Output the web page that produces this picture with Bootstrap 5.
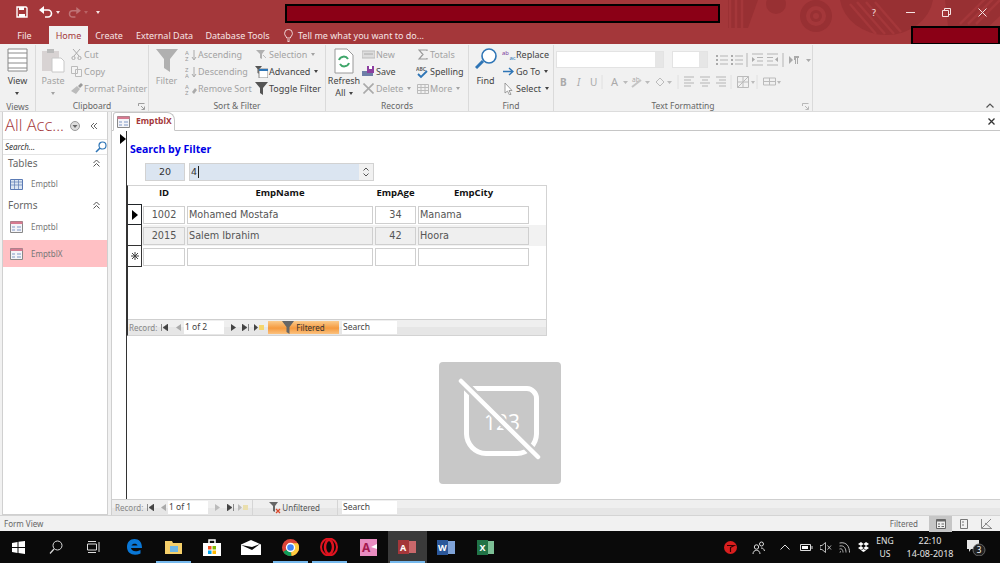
<!DOCTYPE html>
<html lang="en">
<head>
  <meta charset="UTF-8" />
  <meta name="viewport" content="width=device-width, initial-scale=1.0" />
  <title>Access - EmptblX</title>
  <link href="https://cdn.jsdelivr.net/npm/bootstrap@5.3.3/dist/css/bootstrap.min.css" rel="stylesheet" />
  <script src="https://cdn.jsdelivr.net/npm/bootstrap@5.3.3/dist/js/bootstrap.bundle.min.js"></script>
  <style>
    html, body { height: 563px; overflow: hidden; }
    body { width: 1000px; background: #f1f1f1; font-family: "Noto Sans", "Open Sans", sans-serif; font-size: 9px; line-height: 1; color: #444; }
    svg { display: block; flex: none; }

    /* fixed slots for toolbars */
    .s7 { width: 7px; } .s8 { width: 8px; } .s11 { width: 11px; } .s12 { width: 12px; } .s14 { width: 14px; } .s15 { width: 15px; }
    .s19 { width: 19px; } .s24 { width: 24px; } .s26 { width: 26px; } .s28 { width: 28.5px; } .s32 { width: 32px; } .s66 { width: 66px; }
    .slot { display: flex; justify-content: center; align-items: center; flex: none; }
    .slot-l { display: flex; align-items: center; flex: none; }

    /* title bar */
    .titlebar { height: 44px; background: #a4373a; color: #f6e4e4; position: relative; overflow: hidden; }
    .title-art { position: absolute; left: 0; top: 0; }
    .redact { position: absolute; background: #8b0016; border: 2px solid #000; }
    .redact-a { left: 285px; top: 4px; width: 435px; height: 19px; }
    .redact-b { left: 911px; top: 26px; width: 89px; height: 19px; }
    .qat { height: 24px; position: relative; padding-left: 16px; }
    .qat-undo { margin-left: 11px; }
    .tabs { height: 20px; position: relative; }
    .rtab { height: 18px; margin-top: 2px; display: flex; align-items: center; justify-content: center; }
    .rtab.active { background: #f1f1f1; color: #a4373a; }
    .w-file { width: 49px; } .w-home { width: 39px; } .w-create { width: 42px; } .w-ext { width: 69px; } .w-db { width: 77px; }
    .tell { margin-left: 8px; gap: 5px; }
    .winbtns { position: absolute; right: 0; top: 0; height: 24px; }
    .winbtns div { width: 36px; display: flex; justify-content: center; }

    /* ribbon */
    .ribbon { height: 68px; background: #f1f1f1; border-bottom: 1px solid #dcdcdc; }
    .rgroup { height: 66px; margin-top: 1px; border-right: 1px solid #dadada; position: relative; }
    .rgroup-body { height: 57px; }
    .rgroup-label { height: 9px; padding-top: 1px; box-sizing: content-box; text-align: center; color: #666; font-size: 8.5px; }
    .g-views { width: 36px; } .g-clip { width: 113px; } .g-sort { width: 177px; } .g-rec { width: 143px; } .g-find { width: 85px; } .g-text { width: 259px; }
    .launcher { position: absolute; right: 3px; bottom: 1px; }
    .big { display: flex; flex-direction: column; align-items: center; padding-top: 3px; flex: none; }
    .big .ico { height: 27px; display: flex; align-items: flex-start; }
    .big span { line-height: 12px; text-align: center; }
    .b-clip { width: 34px; } .b-sort { width: 35px; } .b-rec { width: 36px; } .b-find { width: 33px; }
    .c-sort-a { width: 71px; } .c-rec-a { width: 54px; }
    .smallcol { display: flex; flex-direction: column; padding-top: 1px; flex: none; }
    .smallcol > div { height: 17px; display: flex; align-items: center; gap: 1px; white-space: nowrap; }
    .ico12 { width: 13px; display: flex; justify-content: center; flex: none; }
    .off { color: #a3a3a3; }
    .caret-d { display: inline-block; border: 2px solid transparent; border-top: 3px solid currentColor; border-bottom: 0; margin-left: 3px; vertical-align: middle; }
    .text-body-dark { color: #444; }
    .text-rows { padding: 6px 0 0 2px; }
    .text-row-a { gap: 8px; }
    .text-row-b { margin-top: 7px; }
    .combo { height: 17px; background: #fff; border: 1px solid #e3e3e3; position: relative; flex: none; }
    .combo::after { content: ""; position: absolute; right: 0; top: 0; bottom: 0; width: 8px; background: #e6e6e6; }
    .combo-a { width: 108px; } .combo-b { width: 36px; }
    .collapse-r { position: absolute; right: 6px; bottom: 3px; }

    /* main */
    .main { height: 403px; background: #f1f1f1; }
    .navpane { width: 106px; margin: 0 3px 0 2px; background: #fff; border: 1px solid #d0d0d0; border-top: 0; flex: none; }
    .all-acc { height: 27px; color: #a4373a; font-family: "Open Sans", sans-serif; font-size: 16.5px; font-weight: 300; padding-left: 2px; }
    .acc-menu { margin-left: 6px; }
    .acc-hide { margin-left: 10px; }
    .nav-search { height: 16px; border-top: 1px solid #e4e4e4; border-bottom: 1px solid #e4e4e4; font-style: italic; font-size: 8px; padding-left: 2px; color: #333; }
    .nav-head { height: 15.5px; font-size: 10px; color: #666; padding: 0 7px 0 5px; }
    .nav-item { height: 27px; padding-left: 7px; gap: 8px; font-size: 8px; color: #777; }
    .nav-item.sel { background: #ffc0c4; }
    .doc { width: 889px; background: #fff; border-left: 1px solid #cfcfcf; }
    .tabstrip { height: 19px; background: #fff; border-bottom: 1px solid #c6c6c6; position: relative; }
    .doc-tab { width: 62px; height: 19px; margin-left: 1px; background: #fff; border: 1px solid #c6c6c6; border-bottom-color: #fff; border-radius: 3px 8px 0 0; padding-left: 3px; gap: 6px; color: #a4373a; font-weight: 700; font-size: 8.5px; }
    .tab-close { position: absolute; right: 5px; top: 6px; }
    .form-area { flex: 1; position: relative; overflow: hidden; }
    .form-rule { position: absolute; left: 14px; top: 0; bottom: 0; width: 1px; background: #333; }
    .form-arrow { position: absolute; left: 8px; top: 3px; }
    .form-inner { padding: 11px 0 0 15px; }
    .form-title { font-family: "Open Sans", sans-serif; color: #0000e6; font-size: 10.5px; font-weight: 700; height: 15px; line-height: 15px; padding-left: 3px; }
    .filter-row { margin: 6px 0 0 18px; height: 19px; gap: 4px; color: #333; }
    .fbox { background: #dbe5f1; border: 1px solid #d2d2d2; height: 18px; display: flex; align-items: center; font-family: "DejaVu Sans", sans-serif; font-size: 9.5px; }
    .fbox-a { width: 40px; justify-content: center; }
    .fbox-b { width: 185px; padding-left: 1px; justify-content: space-between; }
    .fbox-value { border-right: 1px solid #222; padding-right: 1px; line-height: 12px; }
    .spin { width: 14px; height: 16px; background: #f1f1f1; display: flex; flex-direction: column; align-items: center; justify-content: space-around; padding: 2px 0; }
    .subform { width: 420px; height: 151px; margin-top: 3px; border: 1px solid #d3d3d3; border-left-color: #333; position: relative; }
    .sub-head { height: 18px; font-family: "Open Sans", sans-serif; font-weight: 700; font-size: 9.5px; color: #111; padding-top: 2px; }
    .c-sel { width: 14px; flex: none; } .c-id { width: 42px; margin-left: 1px; } .c-name { width: 186px; margin-left: 2px; } .c-age { width: 41px; margin-left: 2px; } .c-city { width: 111px; margin-left: 2px; }
    .sub-row { height: 21px; align-items: center; }
    .sub-row.alt { background: #f2f2f2; }
    .sub-row .c-sel { height: 21px; border: 1px solid #333; border-left: 0; border-top-width: 0; display: flex; align-items: center; justify-content: center; background: #fff; }
    .cell { height: 18px; border: 1px solid #cfcfcf; background: #fff; display: flex; align-items: center; font-family: "DejaVu Sans", sans-serif; font-size: 9.7px; color: #555; padding: 0 1px; }
    .alt .cell { background: #efefef; }
    .cell.ctr { justify-content: center; }
    .recnav { height: 16px; background: linear-gradient(#efefef 50%, #e6e6e6 50%); border-top: 1px solid #cfcfcf; color: #888; font-size: 8px; }
    .sub-nav { position: absolute; left: 0; right: 0; bottom: 0; padding-left: 1px; }
    .recbox { background: #fff; height: 13px; display: flex; align-items: center; padding-left: 1px; color: #444; font-size: 8.5px; flex: none; }
    .rb-a { width: 40px; margin-right: 7px; } .rb-b { width: 55px; }
    .filtered { width: 71px; height: 13px; margin-right: 3px; background: linear-gradient(#fbcb8c, #f59a3f 55%, #fbc27f); color: #333; gap: 2px; justify-content: center; flex: none; }
    .unfiltered { width: 86px; justify-content: flex-end; padding-right: 17px; gap: 1px; border-left: 1px solid #d5d5d5; border-right: 1px solid #d5d5d5; height: 15px; margin-right: 4px; color: #555; flex: none; }
    .no-data { width: 122px; height: 122px; margin: 26px 0 0 312px; background: #c8c8c8; border-radius: 4px; display: flex; align-items: center; justify-content: center; }
    .form-nav { height: 16px; padding-left: 3px; flex: none; }
    .statusbar { height: 16px; background: #f1f1f1; border-top: 1px solid #d4d4d4; padding: 0 2px 0 4px; color: #666; font-size: 8px; }
    .status-label { margin-right: 11px; }
    .viewbtn { width: 23px; height: 16px; display: flex; align-items: center; justify-content: center; }
    .viewbtn.on { background: #c6c6c6; }

    /* taskbar */
    .taskbar { height: 32px; background: #0a0a0a; color: #e4e4e4; }
    .tb-ico { width: 39px; height: 32px; display: flex; align-items: center; justify-content: center; flex: none; position: relative; }
    .tb-ico.sys { width: 37.5px; }
    .tb-ico.first-app { margin-left: 2px; }
    .tb-ico.open::after { content: ""; position: absolute; left: 2px; right: 2px; bottom: 0; height: 2px; background: #76b9ed; }
    .tb-ico.cur { background: #3a3a3a; }
    .tray { margin-right: 11px; }
    .tray-text { font-size: 8.5px; line-height: 13px; text-align: center; flex: none; }
    .tray-time { font-size: 9px; }
  </style>
</head>
<body>
  <div class="titlebar">
    <svg class="title-art" width="1000" height="44" viewBox="0 0 1000 44">
      <g fill="#983033">
        <circle cx="776" cy="4" r="10"/>
        <path d="M840 0h93a47 41 0 0 1-93 0z"/>
        <path d="M728 0h30l-10 28h-20z"/>
        <path d="M945 0h55v16l-30 28h-20z"/>
        <circle cx="816" cy="16" r="16"/>
      </g>
      <circle cx="816" cy="16" r="10" fill="#a4373a"/>
      <circle cx="816" cy="16" r="6" fill="#983033"/>
      <circle cx="816" cy="16" r="3" fill="#a4373a"/>
      <g stroke="#a4373a" stroke-width="2.5">
        <path d="M850 4l26 30M857 2l28 32M866 2l28 32M875 2l26 30M730 0v28M736 0v28M742 0v28"/>
        <path d="M960 24l26-26M968 24l26-26M976 24l24-24"/>
      </g>
    </svg>
    <div class="qat d-flex align-items-center">
      <svg width="12" height="12" viewBox="0 0 12 12"><path d="M1 1h9l1 1v9H1z" fill="none" stroke="#fff" stroke-width="1.4"/><path d="M3 1h5v3H3zM3 8h6v3H3z" fill="#fff"/></svg>
      <svg class="qat-undo" width="14" height="12" viewBox="0 0 14 12"><path d="M3 4h6a3.5 3.5 0 0 1 0 7H6" fill="none" stroke="#fff" stroke-width="1.6"/><path d="M0 4l5-4v8z" fill="#fff"/></svg>
      <span class="caret-d"></span>
      <svg class="ms-2" width="13" height="11" viewBox="0 0 14 12" opacity=".3"><path d="M11 4H5a3.5 3.5 0 0 0 0 7h3" fill="none" stroke="#fff" stroke-width="1.6"/><path d="M14 4L9 0v8z" fill="#fff"/></svg>
      <span class="caret-d opacity-25"></span>
      <span class="caret-d ms-2"></span>
    </div>
    <div class="tabs d-flex">
      <div class="rtab w-file">File</div>
      <div class="rtab w-home active">Home</div>
      <div class="rtab w-create">Create</div>
      <div class="rtab w-ext">External Data</div>
      <div class="rtab w-db">Database Tools</div>
      <div class="rtab tell">
        <svg width="9" height="13" viewBox="0 0 9 13"><path d="M2.7 9C2.5 7.5.6 6.7.6 4.3a3.9 3.9 0 0 1 7.8 0C8.4 6.7 6.5 7.5 6.3 9zM3 11h3M3.5 12.5h2" fill="none" stroke="#f6e4e4" stroke-width=".9"/></svg>
        <span>Tell me what you want to do...</span>
      </div>
    </div>
    <div class="redact redact-a"></div>
    <div class="redact redact-b"></div>
    <div class="winbtns d-flex align-items-center">
      <div>?</div>
      <div><svg width="9" height="9" viewBox="0 0 9 9"><path d="M0 4.5h9" stroke="#f6e4e4"/></svg></div>
      <div><svg width="9" height="9" viewBox="0 0 9 9"><path d="M.5 2.5h6v6h-6zM2.5 2.5v-2h6v6h-2" fill="none" stroke="#f6e4e4"/></svg></div>
      <div><svg width="9" height="9" viewBox="0 0 9 9"><path d="M.5.5l8 8M8.5.5l-8 8" stroke="#f6e4e4"/></svg></div>
    </div>
  </div>

  <div class="ribbon d-flex">
    <div class="rgroup g-views">
      <div class="rgroup-body big">
        <div class="ico"><svg width="21" height="24" viewBox="0 0 21 24"><path d="M1 1h19v22H1zM1 5h19M1 10h19M1 15h19M1 20h19" fill="#fff" stroke="#8a8a8a"/></svg></div>
        <span>View<br><i class="caret-d m-0"></i></span>
      </div>
      <div class="rgroup-label">Views</div>
    </div>
    <div class="rgroup g-clip d-flex flex-column">
      <div class="rgroup-body d-flex off">
        <div class="big b-clip">
          <div class="ico"><svg width="24" height="25" viewBox="0 0 24 25"><path d="M1 3h17v20H1z" fill="#d8d3d3"/><path d="M6 1h7v4H6z" fill="#bbb"/><path d="M11 10h9l3 3v11H11z" fill="#fff" stroke="#c8c8c8"/></svg></div>
          <span>Paste<br><i class="caret-d m-0"></i></span>
        </div>
        <div class="smallcol">
          <div><span class="ico12"><svg width="11" height="11" viewBox="0 0 11 11"><path d="M2 0l6 7M9 0L3 7" stroke="#aaa"/><circle cx="2.5" cy="9" r="1.6" fill="none" stroke="#aaa"/><circle cx="8.5" cy="9" r="1.6" fill="none" stroke="#aaa"/></svg></span>Cut</div>
          <div><span class="ico12"><svg width="11" height="11" viewBox="0 0 11 11"><path d="M.5.5h6v7h-6zM4.5 3.5h6v7h-6z" fill="#f4f4f4" stroke="#bbb"/></svg></span>Copy</div>
          <div><span class="ico12"><svg width="12" height="11" viewBox="0 0 12 11"><path d="M0 8l6-5 3 3-4 5z" fill="#bbb"/><path d="M7 3l3-3 2 2-3 3z" fill="#999"/></svg></span>Format Painter</div>
        </div>
      </div>
      <div class="rgroup-label">Clipboard</div>
      <svg class="launcher" width="7" height="7" viewBox="0 0 7 7"><path d="M.5 3V.5H6.500M3 3l3 3M6.500 3.500v3H3.500" fill="none" stroke="#888" stroke-width=".8"/></svg>
    </div>
    <div class="rgroup g-sort d-flex flex-column">
      <div class="rgroup-body d-flex off">
        <div class="big b-sort">
          <div class="ico"><svg width="22" height="25" viewBox="0 0 22 25"><path d="M0 1h22l-8 10v13l-6-4v-9z" fill="#b0b0b0"/></svg></div>
          <span>Filter</span>
        </div>
        <div class="smallcol c-sort-a">
          <div><span class="ico12"><svg width="12" height="14" viewBox="0 0 12 14"><path d="M9 2v9M7 9l2 3 2-3" fill="none" stroke="#aaa"/><text x="0" y="6.500" font-size="6" fill="#999" font-family="Noto Sans">A</text><text x="0" y="12.500" font-size="6" fill="#999" font-family="Noto Sans">Z</text></svg></span>Ascending</div>
          <div><span class="ico12"><svg width="12" height="14" viewBox="0 0 12 14"><path d="M9 2v9M7 9l2 3 2-3" fill="none" stroke="#aaa"/><text x="0" y="6.500" font-size="6" fill="#999" font-family="Noto Sans">Z</text><text x="0" y="12.500" font-size="6" fill="#999" font-family="Noto Sans">A</text></svg></span>Descending</div>
          <div><span class="ico12"><svg width="12" height="14" viewBox="0 0 12 14"><path d="M7 10l3-4 2 2-3 4z" fill="#aaa"/><text x="0" y="6.500" font-size="6" fill="#999" font-family="Noto Sans">A</text><text x="0" y="12.500" font-size="6" fill="#999" font-family="Noto Sans">Z</text></svg></span>Remove Sort</div>
        </div>
        <div class="smallcol">
          <div><span class="ico12"><svg width="11" height="11" viewBox="0 0 11 11"><path d="M0 1h9L6 5v5L4 9V5z" fill="#b0b0b0"/><path d="M7 6l3 3" stroke="#bbb"/></svg></span>Selection<i class="caret-d"></i></div>
          <div class="text-body-dark"><span class="ico12"><svg width="13" height="13" viewBox="0 0 13 13"><path d="M0 1h7L4.500 4v5L2.500 8V4z" fill="#555"/><path d="M4 4h9v9H4z" fill="#fff" stroke="#888"/><path d="M4 4h9v2H4z" fill="#2e75b6"/></svg></span><span>Advanced</span><i class="caret-d"></i></div>
          <div class="text-body-dark"><span class="ico12"><svg width="13" height="13" viewBox="0 0 13 13"><path d="M0 0h13L8 6v7L5 11V6z" fill="#555"/></svg></span>Toggle Filter</div>
        </div>
      </div>
      <div class="rgroup-label">Sort &amp; Filter</div>
    </div>
    <div class="rgroup g-rec d-flex flex-column">
      <div class="rgroup-body d-flex">
        <div class="big b-rec">
          <div class="ico"><svg width="20" height="26" viewBox="0 0 20 26"><path d="M1 1h12l6 6v18H1z" fill="#fff" stroke="#999"/><path d="M5 12a5 5 0 0 1 9-1M15 15a5 5 0 0 1-9 1" fill="none" stroke="#3fa66a" stroke-width="2"/></svg></div>
          <span>Refresh<br>All<i class="caret-d"></i></span>
        </div>
        <div class="smallcol c-rec-a off">
          <div><span class="ico12"><svg width="13" height="9" viewBox="0 0 13 9"><path d="M0 1h13v7H0z" fill="#ddd" stroke="#bbb"/><path d="M2 4h9" stroke="#aaa"/></svg></span>New</div>
          <div class="text-body-dark"><span class="ico12"><svg width="13" height="11" viewBox="0 0 13 11"><path d="M0 5h11v5H0z" fill="#6e7fa8"/><path d="M5 0h7v7H5z" fill="#8c3fa0"/><path d="M7 0h3v3H7z" fill="#fff"/></svg></span>Save</div>
          <div><span class="ico12"><svg width="11" height="11" viewBox="0 0 11 11"><path d="M.5.500l10 10M10.500.5l-10 10" stroke="#aaa" stroke-width="1.600"/></svg></span>Delete<i class="caret-d"></i></div>
        </div>
        <div class="smallcol off">
          <div><span class="ico12"><svg width="10" height="11" viewBox="0 0 10 11"><path d="M9 2V1H1l4 4.500L1 10h8V9" fill="none" stroke="#999" stroke-width="1.200"/></svg></span>Totals</div>
          <div class="text-body-dark"><span class="ico12"><svg width="13" height="14" viewBox="0 0 13 14"><text x="0" y="6" font-size="5" font-weight="700" fill="#666" font-family="Noto Sans">ABC</text><path d="M2 9l3 3 6-6" fill="none" stroke="#2e75b6" stroke-width="1.800"/></svg></span>Spelling</div>
          <div><span class="ico12"><svg width="12" height="10" viewBox="0 0 12 10"><path d="M.5.500h11v9H.5zM.5 3.500h11M.5 6.500h11M4 .5v9M8 .5v9" fill="#f1f1f1" stroke="#bbb"/></svg></span>More<i class="caret-d"></i></div>
        </div>
      </div>
      <div class="rgroup-label">Records</div>
    </div>
    <div class="rgroup g-find d-flex flex-column">
      <div class="rgroup-body d-flex">
        <div class="big b-find">
          <div class="ico"><svg width="22" height="23" viewBox="0 0 22 23"><circle cx="14" cy="8" r="7" fill="#fff" stroke="#2e75b6" stroke-width="1.600"/><path d="M8 13l-7 7" stroke="#2e75b6" stroke-width="3"/></svg></div>
          <span>Find</span>
        </div>
        <div class="smallcol">
          <div><span class="ico12"><svg width="14" height="14" viewBox="0 0 14 14"><text x="0" y="6.500" font-size="6" fill="#7a3f9f" font-family="Noto Sans">ab</text><text x="7.500" y="12" font-size="6" fill="#2e75b6" font-family="Noto Sans">ac</text></svg></span>Replace</div>
          <div><span class="ico12"><svg width="11" height="9" viewBox="0 0 11 9"><path d="M0 4.500h9M6 1l4 3.500L6 8" fill="none" stroke="#2e75b6" stroke-width="1.500"/></svg></span>Go To<i class="caret-d"></i></div>
          <div><span class="ico12"><svg width="9" height="13" viewBox="0 0 9 13"><path d="M1 1v10l2.500-2 2 4 1.500-.7-2-3.800H8z" fill="#fff" stroke="#888" stroke-width=".8"/></svg></span>Select<i class="caret-d"></i></div>
        </div>
      </div>
      <div class="rgroup-label">Find</div>
    </div>
    <div class="rgroup g-text d-flex flex-column">
      <div class="rgroup-body text-rows off">
        <div class="d-flex align-items-center text-row-a">
          <div class="combo combo-a"></div><div class="combo combo-b"></div>
          <svg width="96" height="14" viewBox="0 0 96 14"><g fill="none" stroke="#b5b5b5"><path d="M4 3h8M4 7h8M4 11h8M19 3h8M19 7h8M19 11h8M36 1h11M41 4.500h6M41 8h6M36 12h11M51 1h11M51 4.500h6M51 8h6M51 12h11"/><path d="M31 0v14M67 0v14"/></g><path d="M0 2h2v2H0zM0 6h2v2H0zM0 10h2v2H0zM15 2h2v2h-2zM15 6h2v2h-2zM15 10h2v2h-2zM36 4l3 2.500L36 9zM62 4l-3 2.500L62 9zM73 3l4 4-4 4zM78 3h5v2h-1v6h-1V5h-1v6h-1V7h-1zM90 6h5l-2.500 3z" fill="#aaa"/></svg>
        </div>
        <div class="text-row-b">
          <svg width="232" height="14" viewBox="0 0 232 14">
            <text x="4" y="11" font-size="10" font-weight="700" fill="#aaa" font-family="Noto Sans">B</text>
            <text x="21" y="11" font-size="10" font-style="italic" fill="#aaa" font-family="Noto Sans">I</text>
            <text x="34" y="11" font-size="10" fill="#aaa" font-family="Noto Sans">U</text>
            <text x="55" y="11" font-size="11" fill="#aaa" font-family="Noto Sans">A</text>
            <text x="76" y="7" font-size="6.500" fill="#aaa" font-family="Noto Sans">ab</text>
            <path d="M76 12l9-7" stroke="#c4c4c4" stroke-width="2"/>
            <path d="M100 7l4-4 4 4-4 4z" fill="none" stroke="#bbb"/>
            <path d="M46 0v14M122 0v14M175 0v14M201 0v14" stroke="#e0e0e0"/>
            <path d="M67 6h5l-2.500 3zM89 6h5l-2.500 3zM111 6h5l-2.500 3zM195 6h4l-2 3zM221 6h4l-2 3z" fill="#bbb"/>
            <g stroke="#b5b5b5"><path d="M128 2h10M128 5h7M128 8h10M128 11h7M144 2h10M146 5h6M144 8h10M146 11h6M160 2h10M163 5h7M160 8h10M163 11h7"/></g>
            <path d="M181.500 1.500h11v11h-11zM181.500 7h11M187 1.500v11M181.500 12.500l11-11" fill="none" stroke="#bbb"/>
            <path d="M207.500 3h12v7h-12zM207.500 6.500h12M213.500 3v7" fill="none" stroke="#bbb"/>
          </svg>
        </div>
      </div>
      <div class="rgroup-label">Text Formatting</div>
      <svg class="launcher" width="7" height="7" viewBox="0 0 7 7"><path d="M.5 3V.5H6.500M3 3l3 3M6.500 3.500v3H3.500" fill="none" stroke="#aaa" stroke-width=".8"/></svg>
    </div>
    <div class="flex-grow-1 position-relative">
      <svg class="collapse-r" width="8" height="5" viewBox="0 0 8 5"><path d="M.5 4.500L4 1l3.500 3.500" fill="none" stroke="#555" stroke-width="1.200"/></svg>
    </div>
  </div>

  <div class="main d-flex">
    <div class="navpane">
      <div class="all-acc d-flex align-items-center">
        <span>All Acc...</span>
        <svg class="acc-menu" width="10" height="10" viewBox="0 0 10 10"><circle cx="5" cy="5" r="4.500" fill="#ddd" stroke="#999"/><path d="M2.500 4h5L5 7z" fill="#666"/></svg>
        <svg class="acc-hide" width="8" height="8" viewBox="0 0 8 8"><path d="M4 1L1 4l3 3M7 1L4 4l3 3" fill="none" stroke="#666"/></svg>
      </div>
      <div class="nav-search d-flex align-items-center justify-content-between">
        <span>Search...</span>
        <svg width="12" height="12" viewBox="0 0 12 12"><circle cx="7.500" cy="4.500" r="3.500" fill="none" stroke="#2e75b6" stroke-width="1.200"/><path d="M5 7l-4 4" stroke="#2e75b6" stroke-width="1.600"/></svg>
      </div>
      <div class="nav-head d-flex align-items-center justify-content-between"><span>Tables</span><svg width="7" height="8" viewBox="0 0 7 8"><path d="M.5 4L3.500 1l3 3M.5 7.500l3-3 3 3" fill="none" stroke="#555"/></svg></div>
      <div class="nav-item d-flex align-items-center">
        <svg width="13" height="11" viewBox="0 0 13 11"><path d="M.5.500h12v10H.5z" fill="#dce6f2" stroke="#5b7bb5"/><path d="M.5 3h12M.5 6h12M4.500.5v10M8.500.5v10" stroke="#5b7bb5" stroke-width=".7"/></svg>
        <span>Emptbl</span>
      </div>
      <div class="nav-head d-flex align-items-center justify-content-between"><span>Forms</span><svg width="7" height="8" viewBox="0 0 7 8"><path d="M.5 4L3.500 1l3 3M.5 7.500l3-3 3 3" fill="none" stroke="#555"/></svg></div>
      <div class="nav-item d-flex align-items-center">
        <svg width="13" height="12" viewBox="0 0 13 12"><path d="M.5.500h12v11H.5z" fill="#f4f4f8" stroke="#888"/><path d="M.5.500h12v2.500H.5z" fill="#d77a90"/><path d="M2 6h3M2 9h3M7 6h4M7 9h4" stroke="#7f98c6"/></svg>
        <span>Emptbl</span>
      </div>
      <div class="nav-item sel d-flex align-items-center">
        <svg width="13" height="12" viewBox="0 0 13 12"><path d="M.5.500h12v11H.5z" fill="#f4f4f8" stroke="#888"/><path d="M.5.500h12v2.500H.5z" fill="#d77a90"/><path d="M2 6h3M2 9h3M7 6h4M7 9h4" stroke="#7f98c6"/></svg>
        <span>EmptblX</span>
      </div>
    </div>

    <div class="doc d-flex flex-column">
      <div class="tabstrip">
        <div class="doc-tab d-flex align-items-center">
          <svg width="13" height="12" viewBox="0 0 13 12"><path d="M.5.500h12v11H.5z" fill="#f4f4f8" stroke="#888"/><path d="M.5.500h12v2.500H.5z" fill="#d77a90"/><path d="M2 6h3M2 9h3M7 6h4M7 9h4" stroke="#7f98c6"/></svg>
          <span>EmptblX</span>
        </div>
        <svg class="tab-close" width="7" height="7" viewBox="0 0 7 7"><path d="M.5.500l6 6M6.500.5l-6 6" stroke="#333" stroke-width="1.300"/></svg>
      </div>
      <div class="form-area">
        <div class="form-rule"></div>
        <svg class="form-arrow" width="6" height="10" viewBox="0 0 6 10"><path d="M0 0l6 5-6 5z" fill="#000"/></svg>
        <div class="form-inner">
          <div class="form-title">Search by Filter</div>
          <div class="filter-row d-flex">
            <div class="fbox fbox-a">20</div>
            <div class="fbox fbox-b"><span class="fbox-value">4</span>
              <div class="spin">
                <svg width="6" height="4" viewBox="0 0 6 4"><path d="M.5 3.500L3 1l2.500 2.500" fill="none" stroke="#555"/></svg>
                <svg width="6" height="4" viewBox="0 0 6 4"><path d="M.5.500L3 3 5.500.5" fill="none" stroke="#555"/></svg>
              </div>
            </div>
          </div>
          <div class="subform">
            <div class="sub-head d-flex text-center">
              <div class="c-sel"></div><div class="c-id">ID</div><div class="c-name">EmpName</div><div class="c-age">EmpAge</div><div class="c-city">EmpCity</div>
            </div>
            <div class="sub-row d-flex">
              <div class="c-sel border-top border-dark"><svg width="6" height="10" viewBox="0 0 6 10"><path d="M0 0l6 5-6 5z" fill="#000"/></svg></div>
              <div class="cell ctr c-id">1002</div><div class="cell c-name">Mohamed Mostafa</div><div class="cell ctr c-age">34</div><div class="cell c-city">Manama</div>
            </div>
            <div class="sub-row alt d-flex">
              <div class="c-sel"></div>
              <div class="cell ctr c-id">2015</div><div class="cell c-name">Salem Ibrahim</div><div class="cell ctr c-age">42</div><div class="cell c-city">Hoora</div>
            </div>
            <div class="sub-row d-flex">
              <div class="c-sel"><svg width="8" height="8" viewBox="0 0 8 8"><path d="M4 0v8M0 4h8M1 1l6 6M7 1l-6 6" stroke="#444"/></svg></div>
              <div class="cell c-id"></div><div class="cell c-name"></div><div class="cell c-age"></div><div class="cell c-city"></div>
            </div>
            <div class="recnav sub-nav d-flex align-items-center">
              <span class="s32 slot-l">Record:</span>
              <span class="s15 slot-l"><svg width="7" height="7" viewBox="0 0 7 7"><path d="M.5 0v7M7 0L2 3.500 7 7z" fill="#444" stroke="#444" stroke-width=".6"/></svg></span>
              <span class="s8 slot-l"><svg width="5" height="7" viewBox="0 0 5 7"><path d="M5 0L0 3.500 5 7z" fill="#aaa"/></svg></span>
              <div class="recbox rb-a">1 of 2</div>
              <span class="s11 slot-l"><svg width="5" height="7" viewBox="0 0 5 7"><path d="M0 0l5 3.500L0 7z" fill="#444"/></svg></span>
              <span class="s12 slot-l"><svg width="7" height="7" viewBox="0 0 7 7"><path d="M6.500 0v7M0 0l5 3.500L0 7z" fill="#444" stroke="#444" stroke-width=".6"/></svg></span>
              <span class="s14 slot-l"><svg width="10" height="7" viewBox="0 0 10 7"><path d="M0 0l4 3.500L0 7z" fill="#444"/><path d="M5 1h5v5H5z" fill="#f5d76e"/></svg></span>
              <div class="filtered d-flex align-items-center">
                <svg width="12" height="13" viewBox="0 0 12 13"><path d="M0 0h12L7.500 6v7L4.500 11V6z" fill="#666"/></svg>
                <span>Filtered</span>
              </div>
              <div class="recbox rb-b">Search</div>
            </div>
          </div>
          <div class="no-data">
            <svg width="90" height="90" viewBox="0 0 90 90">
              <path d="M11.500 10.500H72A10 10 0 0 1 81.500 20V56A20 20 0 0 1 62 75.500H31A20 20 0 0 1 11.500 56Z" fill="none" stroke="#fff" stroke-width="5"/>
              <text x="47" y="52" text-anchor="middle" font-size="21" fill="#fff" font-family="Open Sans">123</text>
              <path d="M6 3l77 76" stroke="#c8c8c8" stroke-width="9"/>
              <path d="M6 3l77 76" stroke="#fff" stroke-width="4.500" stroke-linecap="round"/>
            </svg>
          </div>
        </div>
      </div>
      <div class="recnav form-nav d-flex align-items-center">
        <span class="s32 slot-l">Record:</span>
        <span class="s14 slot-l"><svg width="7" height="7" viewBox="0 0 7 7"><path d="M.5 0v7M7 0L2 3.500 7 7z" fill="#444" stroke="#444" stroke-width=".6"/></svg></span>
        <span class="s7 slot-l"><svg width="5" height="7" viewBox="0 0 5 7"><path d="M5 0L0 3.500 5 7z" fill="#aaa"/></svg></span>
        <div class="recbox rb-a">1 of 1</div>
        <span class="s12 slot-l"><svg width="5" height="7" viewBox="0 0 5 7"><path d="M0 0l5 3.500L0 7z" fill="#bbb"/></svg></span>
        <span class="s11 slot-l"><svg width="7" height="7" viewBox="0 0 7 7"><path d="M6.500 0v7M0 0l5 3.500L0 7z" fill="#444" stroke="#444" stroke-width=".6"/></svg></span>
        <span class="s14 slot-l"><svg width="10" height="7" viewBox="0 0 10 7"><path d="M0 0l4 3.500L0 7z" fill="#bbb"/><path d="M5 1h5v5H5z" fill="#eadfae"/></svg></span>
        <div class="unfiltered d-flex align-items-center">
          <svg width="12" height="12" viewBox="0 0 12 12"><path d="M0 0h9L6 4v6L4 9V4z" fill="#666"/><path d="M7 7l4 4M11 7l-4 4" stroke="#d9482b" stroke-width="1.300"/></svg>
          <span>Unfiltered</span>
        </div>
        <div class="recbox rb-b">Search</div>
      </div>
    </div>
  </div>

  <div class="statusbar d-flex align-items-center justify-content-between">
    <span>Form View</span>
    <div class="d-flex align-items-center">
      <span class="status-label">Filtered</span>
      <div class="viewbtn on"><svg width="10" height="10" viewBox="0 0 10 10"><path d="M.5.500h9v9h-9z" fill="#eee" stroke="#666"/><path d="M.5.500h9v2h-9z" fill="#666"/><path d="M2 5h2M2 7.500h2M5.500 5h2.500M5.500 7.500h2.500" stroke="#666"/></svg></div>
      <div class="viewbtn"><svg width="10" height="10" viewBox="0 0 10 10"><path d="M1.500.5h7v9h-7zM3 3h2M3 6h2" fill="none" stroke="#777"/></svg></div>
      <div class="viewbtn"><svg width="11" height="10" viewBox="0 0 11 10"><path d="M.5 0v9.500H11M1 9l9-9M4 4l6 5" fill="none" stroke="#888"/></svg></div>
    </div>
  </div>

  <div class="taskbar d-flex align-items-center">
    <div class="tb-ico sys"><svg width="13" height="13" viewBox="0 0 13 13"><path d="M0 2l5.500-1v5H0zM6.500.8L13 0v6H6.500zM0 7h5.500v5L0 11zM6.500 7H13v6l-6.500-1z" fill="#fff"/></svg></div>
    <div class="tb-ico sys"><svg width="14" height="14" viewBox="0 0 14 14"><circle cx="8.500" cy="5.500" r="4.500" fill="none" stroke="#ddd"/><path d="M5 9l-4 4.500" stroke="#ddd" stroke-width="1.200"/></svg></div>
    <div class="tb-ico sys"><svg width="14" height="12" viewBox="0 0 14 12"><path d="M.5 3h9v6h-9zM1 .5h8M1 11.500h8M12 1v10" fill="none" stroke="#ddd"/></svg></div>
    <div class="tb-ico first-app"><svg width="16" height="16" viewBox="0 0 16 16"><path d="M1 8C1 3 4 0 8.500 0 13 0 16 3 16 9H5c.3 3 4.500 4.500 9.500 2v3.500C8 17.500 1 15 1 8zm4.500-1.500h6C11 4 6.500 4 5.500 6.500z" fill="#0a78d7"/></svg></div>
    <div class="tb-ico open"><svg width="17" height="14" viewBox="0 0 17 14"><path d="M0 1h7l1 2h9v11H0z" fill="#f5cf6a"/><path d="M5 6h8v6H5z" fill="#6fb7e6"/></svg></div>
    <div class="tb-ico"><svg width="18" height="17" viewBox="0 0 18 17"><path d="M0 4h18v13H0z" fill="#fff"/><path d="M6 4V1h6v3" fill="none" stroke="#fff" stroke-width="1.500"/><path d="M5 7h3.500v3.500H5z" fill="#f25022"/><path d="M9.500 7H13v3.500H9.500z" fill="#7fba00"/><path d="M5 11.500h3.500V15H5z" fill="#00a4ef"/><path d="M9.500 11.500H13V15H9.500z" fill="#ffb900"/></svg></div>
    <div class="tb-ico"><svg width="20" height="15" viewBox="0 0 20 15"><path d="M0 4.500L10 0l10 4.500V15H0z" fill="#fff"/><path d="M0 5l11 5 8-6-8 3z" fill="#0a0a0a"/></svg></div>
    <div class="tb-ico open"><svg width="17" height="17" viewBox="0 0 32 32"><circle cx="16" cy="16" r="16" fill="#db4437"/><path d="M16 16L2.500 24A16 16 0 0 0 18 32z" fill="#0f9d58"/><path d="M16 8h14a16 16 0 0 1-12 24z" fill="#ffcd40"/><circle cx="16" cy="16" r="7.500" fill="#4285f4" stroke="#fff" stroke-width="2.500"/></svg></div>
    <div class="tb-ico open"><svg width="18" height="18" viewBox="0 0 18 18"><ellipse cx="9" cy="9" rx="8" ry="8.500" fill="none" stroke="#e0131f" stroke-width="2"/><ellipse cx="9" cy="9" rx="4" ry="7" fill="none" stroke="#e0131f" stroke-width="2.500"/></svg></div>
    <div class="tb-ico"><svg width="17" height="17" viewBox="0 0 17 17"><path d="M0 0h17v17H0z" fill="#e88cc0"/><text x="2" y="13" font-size="12" font-weight="700" fill="#a4184f" font-family="Noto Sans">A</text><path d="M11 8l6-3v5z" fill="#fff"/></svg></div>
    <div class="tb-ico cur open"><svg width="18" height="14" viewBox="0 0 18 14"><path d="M8 1h10v12H8z" fill="#c9686b"/><path d="M0 0h11v14H0z" fill="#a4373a"/><text x="2" y="10.500" font-size="9" font-weight="700" fill="#fff" font-family="Noto Sans">A</text></svg></div>
    <div class="tb-ico"><svg width="18" height="15" viewBox="0 0 18 15"><path d="M8 1h10v13H8z" fill="#7fa3d8"/><path d="M0 0h11v15H0z" fill="#2b579a"/><text x="1" y="11" font-size="9" font-weight="700" fill="#fff" font-family="Noto Sans">W</text></svg></div>
    <div class="tb-ico"><svg width="17" height="15" viewBox="0 0 17 15"><path d="M8 1h9v13H8z" fill="#7cbf95"/><path d="M0 0h11v15H0z" fill="#217346"/><text x="2.500" y="11" font-size="9" font-weight="700" fill="#fff" font-family="Noto Sans">X</text></svg></div>
    <div class="tray ms-auto d-flex align-items-center">
      <span class="slot s28"><svg width="13" height="13" viewBox="0 0 13 13"><circle cx="6.500" cy="6.500" r="6.500" fill="#d81e1e"/><path d="M3 4.500h7L6.500 6.500V11" fill="none" stroke="#300" stroke-width="1.200"/></svg></span>
      <span class="slot s28"><svg width="13" height="13" viewBox="0 0 13 13"><circle cx="4.500" cy="6" r="2.200" fill="none" stroke="#ddd"/><circle cx="9.500" cy="3" r="2" fill="none" stroke="#ddd"/><path d="M1 13c0-5 7-5 7 0M9 7c2 0 3 1 3.500 3" fill="none" stroke="#ddd"/></svg></span>
      <span class="slot s24"><svg width="10" height="6" viewBox="0 0 10 6"><path d="M.5 5.500L5 1l4.500 4.500" fill="none" stroke="#ddd"/></svg></span>
      <span class="slot s19"><svg width="13" height="7" viewBox="0 0 13 7"><path d="M.5.500h10v6H.5zM12 2v3" fill="none" stroke="#ddd"/><path d="M2 2h6v3H2z" fill="#fff"/></svg></span>
      <span class="slot s19"><svg width="12" height="11" viewBox="0 0 12 11"><path d="M0 3.500h2L5.500.5v10L2 7.500H0zM7.500 3.500l3.500 4M11 3.500l-3.500 4" fill="none" stroke="#ccc" stroke-width=".9"/></svg></span>
      <span class="slot s19"><svg width="11" height="11" viewBox="0 0 11 11"><path d="M1 10.500a1 1 0 0 1 1-1M.5 7c3-1 3.500 2 3.500 3.500M.5 4c5-1 6.500 3 6.500 6.500M.5 1C8-.5 10.500 5 10.500 10.500" fill="none" stroke="#bbb"/></svg></span>
      <span class="slot s19"><svg width="11" height="10" viewBox="0 0 11 10"><path d="M3 0L0 2l3 2-3 2 3 2 2.500-2L8 8l3-2-3-2 3-2-3-2-2.500 2zM5.500 2L8 4 5.500 6 3 4zM3 8.500l2.500 1.500L8 8.500 5.500 7z" fill="#fff" fill-rule="evenodd"/></svg></span>
      <div class="tray-text s24">ENG<br>US</div>
      <div class="tray-text tray-time s66">22:10<br>14-08-2018</div>
      <span class="slot s26"><svg width="19" height="17" viewBox="0 0 19 17"><path d="M0 1h12v9H4l-2 3v-3H0z" fill="#e8e8e8"/><circle cx="12" cy="11" r="6" fill="#222" stroke="#666"/><text x="12" y="14" text-anchor="middle" font-size="8" fill="#fff" font-family="Noto Sans">3</text></svg></span>
    </div>
  </div>
</body>
</html>
